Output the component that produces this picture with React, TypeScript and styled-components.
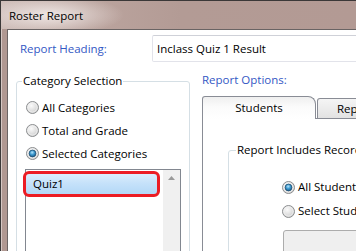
import { useId } from 'react';
import styled, { createGlobalStyle } from 'styled-components';

const GlobalStyle = createGlobalStyle`
  html, body {
    margin: 0;
    padding: 0;
  }
  body {
    width: 356px;
    height: 251px;
    overflow: hidden;
    background: #fff;
    color: #000;
    font-family: 'Open Sans', 'Liberation Sans', sans-serif;
    font-size: 11.5px;
  }
`;

const Window = styled.div`
  width: 356px;
  height: 251px;
  box-sizing: border-box;
  overflow: hidden;
  display: flex;
  flex-direction: column;
  border-top: 1px solid #3b3838;
  border-left: 1px solid #3b3838;
  background: #b09892;
  box-shadow: inset 1px 0 0 #d6c8c4;
`;

const TitleBar = styled.div`
  height: 28px;
  flex: 0 0 28px;
  display: flex;
  align-items: center;
  padding-left: 8px;
  padding-top: 1px;
  box-sizing: border-box;
  background:
    radial-gradient(ellipse 75px 20px at 48px 14px, rgba(246, 240, 238, 0.85), rgba(246, 240, 238, 0) 100%),
    linear-gradient(90deg, #cbb9b4 0, #bba49e 90px, #b39b95 180px, #b39a94 100%);
  line-height: 16px;
`;

const Client = styled.div`
  flex: 1;
  margin-left: 6px;
  border-top: 1px solid #6a6464;
  border-left: 1px solid #6a6464;
  background: #fff;
  padding: 5px 0 0 8px;
  display: flex;
  flex-direction: column;
  min-height: 0;
`;

const HeadingRow = styled.div`
  display: flex;
  align-items: center;
  height: 27px;
`;

const BlueLabel = styled.div`
  color: #3358c4;
  line-height: 16px;
`;

const HeadingLabel = styled(BlueLabel)`
  flex: 0 0 132px;
  margin-left: 4px;
`;

const TextBox = styled.div`
  flex: 0 0 320px;
  height: 27px;
  box-sizing: border-box;
  border: 1px solid #e2e3ea;
  border-top-color: #cfd1d8;
  border-radius: 2px;
  display: flex;
  align-items: center;
  padding-left: 4px;
  white-space: nowrap;
`;

const MainRow = styled.div`
  display: flex;
  align-items: flex-start;
  margin-top: 11px;
`;

const GroupBox = styled.fieldset<{ $width: number; $pad: number }>`
  margin: 0;
  width: ${p => p.$width}px;
  min-width: 0;
  box-sizing: border-box;
  border: 1px solid #d5dfe5;
  border-radius: 3px;
  padding: 0 8px 0 ${p => p.$pad}px;
  height: 200px;
  flex: 0 0 auto;
`;

const Legend = styled.legend<{ $shift: number }>`
  padding: 0 1px;
  margin-left: ${p => p.$shift}px;
  line-height: 16px;
  white-space: nowrap;
`;

const RadioList = styled.div<{ $top: number; $indent: number; $row: number }>`
  display: flex;
  flex-direction: column;
  margin-top: ${p => p.$top}px;
  padding-left: ${p => p.$indent}px;

  & > div {
    height: ${p => p.$row}px;
  }
`;

const RadioRow = styled.div`
  display: flex;
  align-items: center;
  gap: 3px;
  white-space: nowrap;
  line-height: 16px;
`;

const ListBox = styled.div`
  margin-top: 4px;
  width: 156px;
  height: 110px;
  box-sizing: border-box;
  border: 1px solid #828790;
  display: flex;
  background: #fff;
`;

const ListItems = styled.div`
  flex: 1;
  padding-top: 1px;
`;

const SelectedItem = styled.div`
  margin-left: -3px;
  width: 137px;
  height: 26px;
  box-sizing: border-box;
  border: 3px solid #ec1c24;
  border-radius: 6px;
  background: linear-gradient(180deg, #dcedfc 0%, #c6e2fa 45%, #b3d8f7 100%);
  display: flex;
  align-items: center;
  padding-left: 7px;
  line-height: 16px;
`;

const ScrollBar = styled.div`
  flex: 0 0 17px;
  background: #f0f0f0;
  display: flex;
  justify-content: center;
  padding-top: 6px;
  box-sizing: border-box;
`;

const RightColumn = styled.div`
  margin-left: 12px;
  flex: 0 0 auto;
  display: flex;
  flex-direction: column;
`;

const OptionsLabel = styled(BlueLabel)`
  margin-top: -1px;
`;

const TabStrip = styled.div`
  margin-top: 8px;
  height: 22px;
  display: flex;
  align-items: flex-end;
`;

const Tab = styled.div<{ $active?: boolean }>`
  position: relative;
  z-index: ${p => (p.$active ? 1 : 0)};
  box-sizing: border-box;
  border: 1px solid #898c95;
  border-bottom: none;
  display: flex;
  align-items: center;
  white-space: nowrap;
  line-height: 16px;
  ${p =>
    p.$active
      ? `
    width: 114px;
    height: 23px;
    margin-bottom: -1px;
    justify-content: center;
    border-radius: 3px 8px 0 0;
    background: linear-gradient(180deg, #efefef 0%, #fbfbfb 45%, #ffffff 100%);
  `
      : `
    width: 110px;
    height: 20px;
    margin-left: 1px;
    padding-left: 19px;
    border-radius: 3px 3px 0 0;
    background: linear-gradient(180deg, #f5f5f5 0%, #ececec 50%, #e2e2e2 100%);
  `}
`;

const TabPanel = styled.div`
  width: 420px;
  height: 200px;
  box-sizing: border-box;
  border: 1px solid #898c95;
  background: #fff;
  padding: 23px 0 0 25px;
`;

const StudentList = styled.div`
  margin: 7px 0 0 47px;
  width: 260px;
  height: 60px;
  box-sizing: border-box;
  border: 1px solid #acacac;
  border-radius: 3px;
  background: #efefef;
`;

function Radio({ checked }: { checked?: boolean }) {
  const id = useId().replace(/:/g, '');
  return (
    <svg width="13" height="13" viewBox="0 0 13 13">
      <defs>
        <radialGradient id={`${id}o`} cx="40%" cy="35%" r="70%">
          <stop offset="0" stopColor="#fbfbfb" />
          <stop offset="0.6" stopColor="#dedede" />
          <stop offset="1" stopColor="#c4c4c4" />
        </radialGradient>
        <radialGradient id={`${id}b`} cx="45%" cy="35%" r="65%">
          <stop offset="0" stopColor="#b5e4fb" />
          <stop offset="0.5" stopColor="#3c9ad0" />
          <stop offset="1" stopColor="#1b5d8c" />
        </radialGradient>
      </defs>
      <circle cx="6.5" cy="6.5" r="6" fill={`url(#${id}o)`} stroke="#8c8e90" />
      <circle cx="6.5" cy="6.5" r="4.6" fill="none" stroke="#f4f4f4" strokeWidth="0.8" />
      {checked && (
        <circle cx="6.5" cy="6.5" r="3.4" fill={`url(#${id}b)`} stroke="#1f4f72" strokeWidth="0.8" />
      )}
    </svg>
  );
}

function ScrollUpArrow() {
  return (
    <svg width="7" height="4" viewBox="0 0 7 4">
      <path d="M0 4 L3.5 0 L7 4 Z" fill="#9a9a9a" />
    </svg>
  );
}

export default function App() {
  return (
    <>
      <GlobalStyle />
      <Window>
        <TitleBar>Roster Report</TitleBar>
        <Client>
          <HeadingRow>
            <HeadingLabel>Report Heading:</HeadingLabel>
            <TextBox>Inclass Quiz 1 Result</TextBox>
          </HeadingRow>

          <MainRow>
            <GroupBox $width={174} $pad={8}>
              <Legend $shift={-3}>Category Selection</Legend>
              <RadioList $top={7} $indent={1} $row={23}>
                <RadioRow>
                  <Radio />
                  All Categories
                </RadioRow>
                <RadioRow>
                  <Radio />
                  Total and Grade
                </RadioRow>
                <RadioRow>
                  <Radio checked />
                  Selected Categories
                </RadioRow>
              </RadioList>
              <ListBox>
                <ListItems>
                  <SelectedItem>Quiz1</SelectedItem>
                </ListItems>
                <ScrollBar>
                  <ScrollUpArrow />
                </ScrollBar>
              </ListBox>
            </GroupBox>

            <RightColumn>
              <OptionsLabel>Report Options:</OptionsLabel>
              <TabStrip>
                <Tab $active>Students</Tab>
                <Tab>Report Format</Tab>
              </TabStrip>
              <TabPanel>
                <GroupBox $width={380} $pad={7}>
                  <Legend $shift={0}>Report Includes Records</Legend>
                  <RadioList $top={17} $indent={46} $row={24}>
                    <RadioRow>
                      <Radio checked />
                      All Students
                    </RadioRow>
                    <RadioRow>
                      <Radio />
                      Select Students
                    </RadioRow>
                  </RadioList>
                  <StudentList />
                </GroupBox>
              </TabPanel>
            </RightColumn>
          </MainRow>
        </Client>
      </Window>
    </>
  );
}
